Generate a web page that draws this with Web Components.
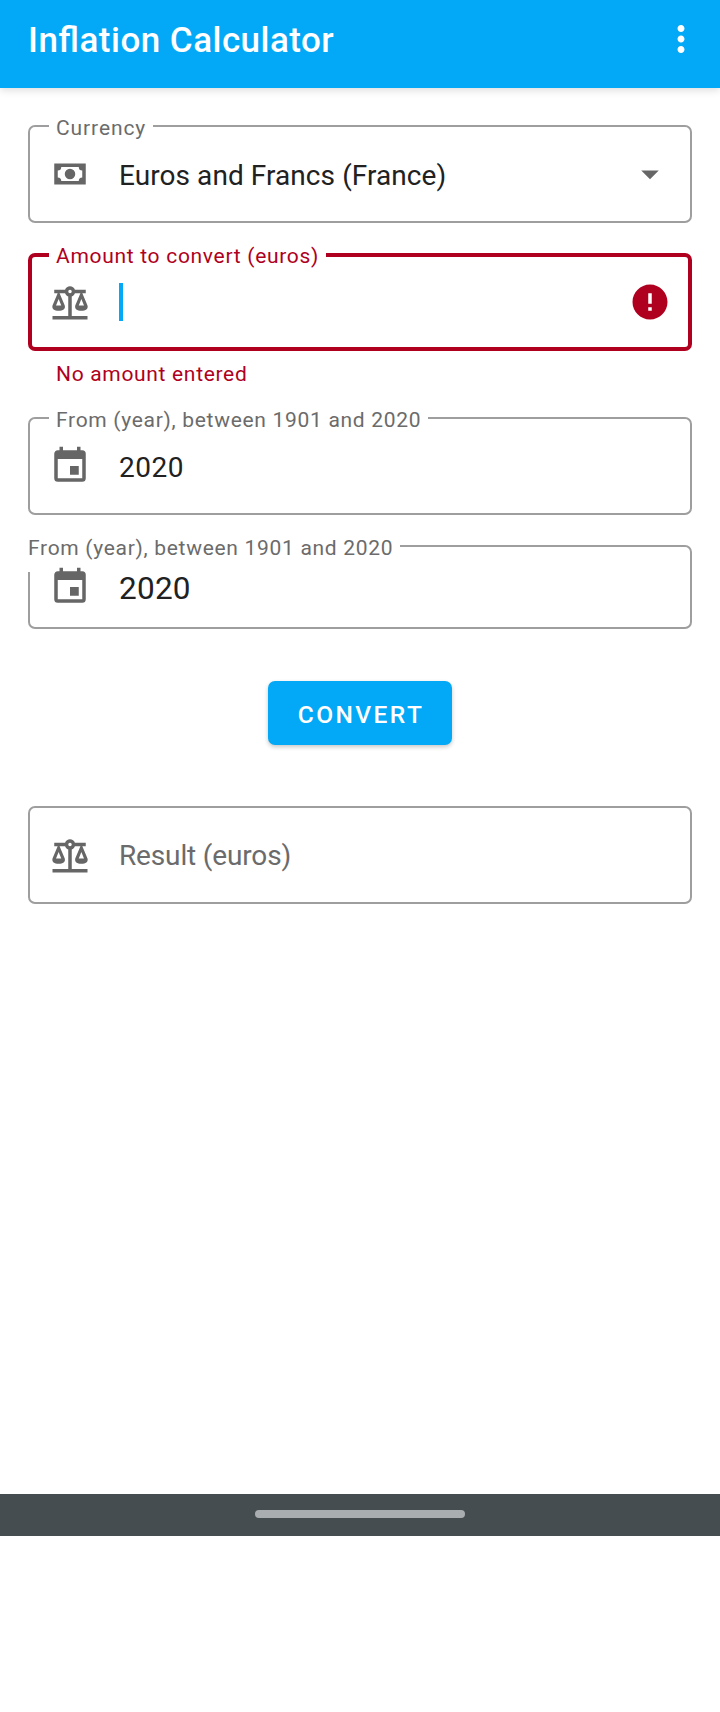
<!DOCTYPE html>
<html lang="en">
<head>
<meta charset="utf-8">
<title>Inflation Calculator</title>
<style>
html,body{margin:0;background:#fff}
body{font-family:Roboto,"Liberation Sans",sans-serif;color:#212121}
</style>
</head>
<body>
<inflation-app></inflation-app>
<script>
const ICONS = {
  cash: 'M3 6h18v12H3V6m9 3a3 3 0 0 1 3 3 3 3 0 0 1-3 3 3 3 0 0 1-3-3 3 3 0 0 1 3-3M7 8a2 2 0 0 1-2 2v4a2 2 0 0 1 2 2h10a2 2 0 0 1 2-2v-4a2 2 0 0 1-2-2H7z',
  scale: 'M12 3c-1.27 0-2.4.8-2.82 2H3v2h1.95L2 14c-.47 2 1 3 3.5 3s4.06-1 3.5-3L6.05 7h3.12c.33.85.98 1.5 1.83 1.83V20H2v2h20v-2h-9V8.82c.85-.32 1.5-.97 1.82-1.82h3.13L15 14c-.47 2 1 3 3.5 3s4.06-1 3.5-3l-2.95-7H21V5h-6.17C14.4 3.8 13.27 3 12 3m0 2a1 1 0 0 1 1 1 1 1 0 0 1-1 1 1 1 0 0 1-1-1 1 1 0 0 1 1-1m-6.5 5.25L7 14H4l1.5-3.75m13 0L20 14h-3l1.5-3.75z',
  calendar: 'M19 19H5V8h14m-3-7v2H8V1H6v2H5c-1.11 0-2 .89-2 2v14a2 2 0 0 0 2 2h14a2 2 0 0 0 2-2V5a2 2 0 0 0-2-2h-1V1m-1 11h-5v5h5v-5z',
  error: 'M12 2C6.48 2 2 6.48 2 12s4.48 10 10 10 10-4.48 10-10S17.52 2 12 2zm1 15h-2v-2h2v2zm0-4h-2V7h2v6z',
  dropdown: 'M7 10l5 5 5-5z',
  more: 'M12 8c1.1 0 2-.9 2-2s-.9-2-2-2-2 .9-2 2 .9 2 2 2zm0 2c-1.1 0-2 .9-2 2s.9 2 2 2 2-.9 2-2-.9-2-2-2zm0 6c-1.1 0-2 .9-2 2s.9 2 2 2 2-.9 2-2-.9-2-2-2z'
};

class MdIcon extends HTMLElement {
  connectedCallback() {
    this.attachShadow({mode: 'open'}).innerHTML = `
      <style>:host{display:block;flex:none;width:42px;height:42px}svg{display:block;width:100%;height:100%;fill:currentColor}</style>
      <svg viewBox="0 0 24 24"><path d="${ICONS[this.getAttribute('name')]}"/></svg>`;
  }
}
customElements.define('md-icon', MdIcon);

class AppBar extends HTMLElement {
  connectedCallback() {
    this.attachShadow({mode: 'open'}).innerHTML = `
      <style>
        :host{display:flex;align-items:center;justify-content:space-between;height:88px;padding:0 18px 10px 28px;box-sizing:border-box;background:#03a9f6;color:#fff;box-shadow:0 2px 8px rgba(0,0,0,.14)}
        h1{margin:2px 0 0;font-size:35px;line-height:41px;font-weight:500;letter-spacing:.47px;font-feature-settings:"liga" 1;white-space:nowrap}
      </style>
      <h1><slot></slot></h1><md-icon name="more"></md-icon>`;
  }
}
customElements.define('app-bar', AppBar);

class OutlinedField extends HTMLElement {
  connectedCallback() {
    const label = this.getAttribute('label');
    const trailing = this.getAttribute('trailing');
    const helper = this.getAttribute('helper');
    this.attachShadow({mode: 'open'}).innerHTML = `
      <style>
        :host{display:block;--line:#9e9e9e;--w:2px;--label:#6b6b6b}
        :host([invalid]){--line:#b00020;--w:4px;--label:#b00020}
        .box{position:relative;display:flex;align-items:center;height:98px;padding:0 21px;box-sizing:border-box;border-radius:7px;box-shadow:inset 0 0 0 var(--w) var(--line)}
        .label{position:absolute;left:21px;top:-9px;padding:0 7px;background:#fff;color:var(--label);font-size:21px;line-height:25px;letter-spacing:var(--label-track,.7px);white-space:nowrap}
        .lead{color:#666;z-index:1}
        .trail{color:#666}
        :host([invalid]) .trail{color:#b00020}
        .value{flex:1;margin-left:28px;padding-top:3px;font-size:28px;line-height:33px;letter-spacing:var(--track,.5px);white-space:nowrap}
        :host([placeholder]) .value{color:#6b6b6b;padding-top:1px}
        .caret{width:4px;height:38px;margin:0 auto 0 28px;background:#03a9f6}
        .helper{margin:11px 0 0 28px;font-size:21px;line-height:25px;letter-spacing:.68px;color:#b00020}
        :host([dense]) .box{height:84px}
        :host([dense]) .label{left:0;padding:0 7px 11px 0}
        :host([dense]) .value{font-size:31.5px;line-height:37px;letter-spacing:.25px}
      </style>
      <div class="box">
        ${label ? `<span class="label">${label}</span>` : ''}
        <md-icon class="lead" name="${this.getAttribute('icon')}"></md-icon>
        ${this.hasAttribute('invalid') ? '<span class="caret"></span>' : '<span class="value"><slot></slot></span>'}
        ${trailing ? `<md-icon class="trail" name="${trailing}"></md-icon>` : ''}
      </div>
      ${helper ? `<div class="helper">${helper}</div>` : ''}`;
  }
}
customElements.define('outlined-field', OutlinedField);

class RaisedButton extends HTMLElement {
  connectedCallback() {
    this.attachShadow({mode: 'open'}).innerHTML = `
      <style>
        :host{display:block}
        button{display:block;width:184px;height:64px;padding:3px 0 0 2px;box-sizing:border-box;border:0;border-radius:7px;background:#03a9f6;color:#fff;font:500 24.5px/29px Roboto,sans-serif;letter-spacing:2.45px;box-shadow:0 2px 4px rgba(0,0,0,.22)}
      </style>
      <button><slot></slot></button>`;
  }
}
customElements.define('raised-button', RaisedButton);

class GestureBar extends HTMLElement {
  connectedCallback() {
    this.attachShadow({mode: 'open'}).innerHTML = `
      <style>
        :host{display:flex;justify-content:center;height:42px;padding-top:16px;box-sizing:border-box;background:#454d51}
        i{width:210px;height:8px;border-radius:4px;background:#a9adb0}
      </style><i></i>`;
  }
}
customElements.define('gesture-bar', GestureBar);

class InflationApp extends HTMLElement {
  connectedCallback() {
    this.attachShadow({mode: 'open'}).innerHTML = `
      <style>
        :host{display:flex;flex-direction:column;height:1712px;padding-bottom:176px;box-sizing:border-box;background:#fff}
        main{flex:1;display:flex;flex-direction:column;padding:37px 28px 0}
        .currency{--track:.07px;--label-track:.9px}
        .amount{margin-top:30px;height:134px}
        .from{margin-top:30px}
        .to{margin-top:30px}
        .result{--track:-.15px}
        raised-button{align-self:center;margin:52px 0 61px}
      </style>
      <app-bar>Inflation Calculator</app-bar>
      <main>
        <outlined-field class="currency" label="Currency" icon="cash" trailing="dropdown">Euros and Francs (France)</outlined-field>
        <outlined-field class="amount" invalid label="Amount to convert (euros)" icon="scale" trailing="error" helper="No amount entered"></outlined-field>
        <outlined-field class="from" label="From (year), between 1901 and 2020" icon="calendar">2020</outlined-field>
        <outlined-field class="to" dense label="From (year), between 1901 and 2020" icon="calendar">2020</outlined-field>
        <raised-button>CONVERT</raised-button>
        <outlined-field class="result" placeholder icon="scale">Result (euros)</outlined-field>
      </main>
      <gesture-bar></gesture-bar>`;
  }
}
customElements.define('inflation-app', InflationApp);
</script>
</body>
</html>
